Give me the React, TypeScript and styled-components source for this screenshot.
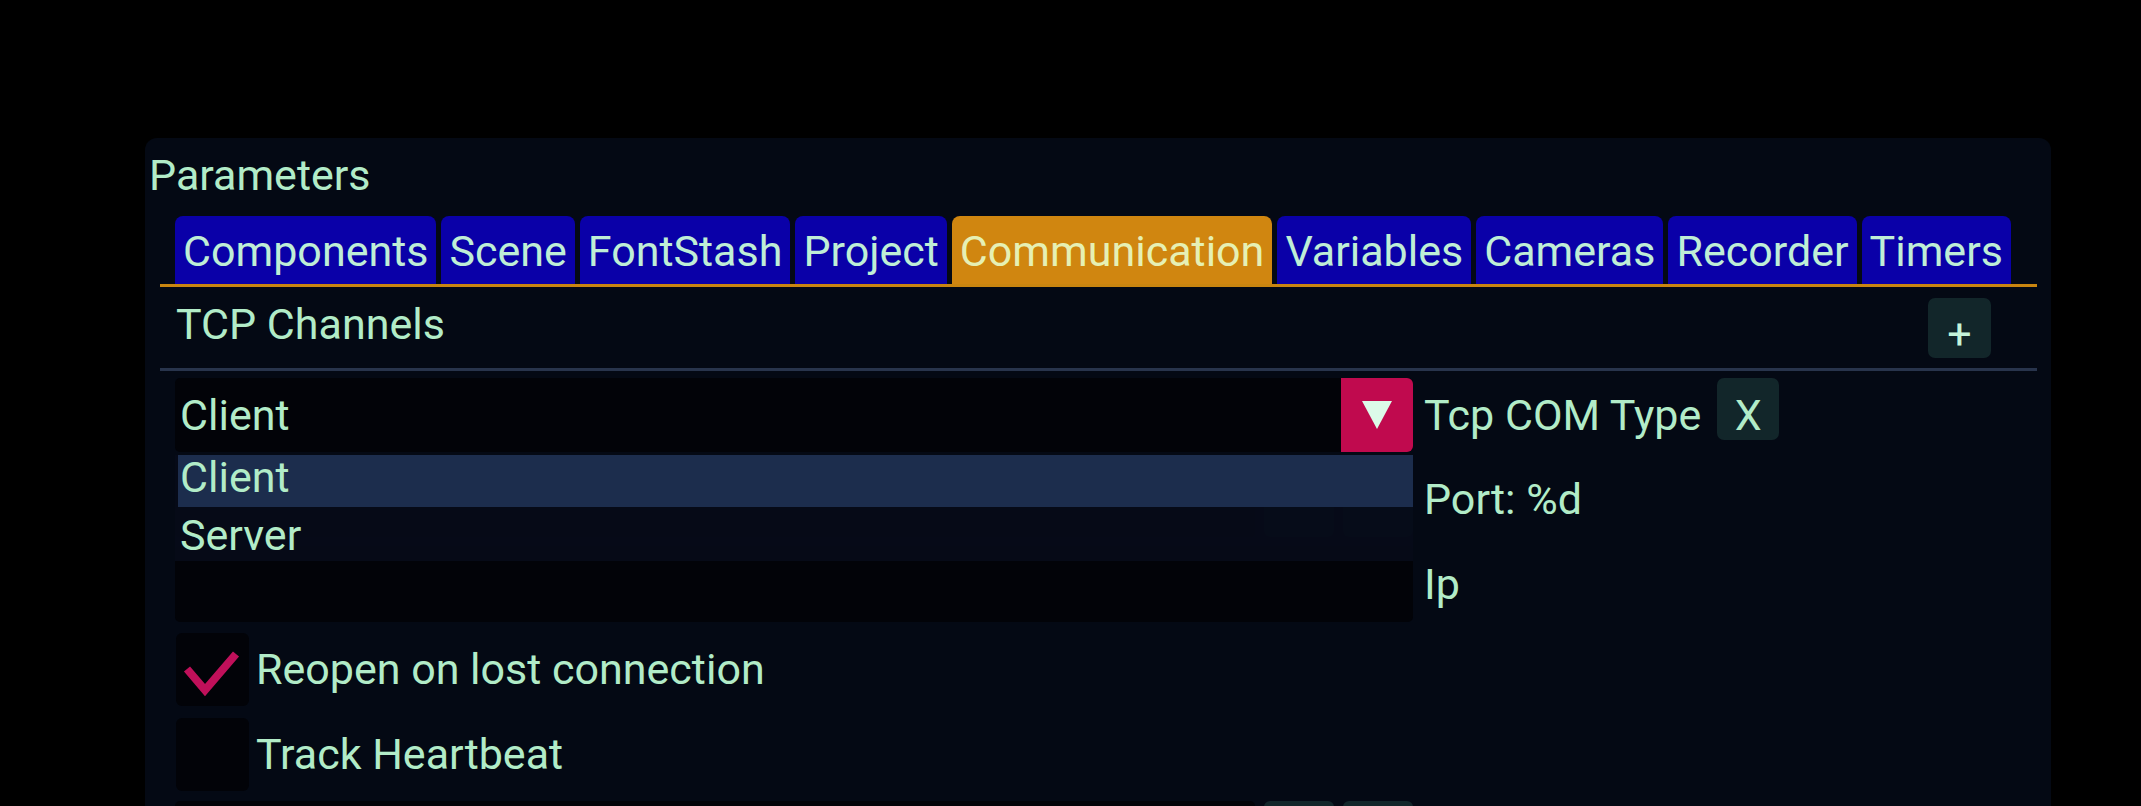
import React from "react";
import styled, { createGlobalStyle } from "styled-components";

const GlobalStyle = createGlobalStyle`
  html, body, #root { margin: 0; padding: 0; background: #000; }
  body { overflow: hidden; font-family: Roboto, "Liberation Sans", sans-serif; }
`;

const Screen = styled.div`
  width: 2141px;
  height: 806px;
  box-sizing: border-box;
  padding: 138px 0 0 145px;
  overflow: hidden;
  background: #000;
`;

const Window = styled.section`
  width: 1906px;
  height: 720px;
  box-sizing: border-box;
  padding: 12px 0 0 4px;
  background: #040914;
  border-radius: 12px 12px 0 0;
  color: #b2ecc8;
  font-size: 43px;
  line-height: 50px;
  display: flex;
  flex-direction: column;
`;

const Title = styled.div`
  height: 50px;
`;

const Body = styled.div`
  margin: 0 14px 0 11px;
  display: flex;
  flex-direction: column;
`;

const TabBar = styled.div`
  margin-top: 16px;
  display: flex;
  gap: 5px;
  padding-left: 15px;
  border-bottom: 3px solid #c98510;
`;

const Tab = styled.div<{ $active?: boolean }>`
  height: 68px;
  box-sizing: border-box;
  padding: 10px 8px 0;
  border-radius: 8px 8px 0 0;
  background: ${(p) => (p.$active ? "#d08610" : "#0a00a8")};
  color: ${(p) => (p.$active ? "#e6f0b4" : "#bfeed6")};
  white-space: nowrap;
`;

const Header = styled.div`
  margin-top: 11px;
  height: 60px;
  display: flex;
  justify-content: space-between;
  align-items: flex-start;
  padding: 0 46px 0 16px;
`;

const HeaderTitle = styled.div`
  padding-top: 1px;
`;

const PlusButton = styled.div`
  width: 63px;
  height: 60px;
  box-sizing: border-box;
  padding-top: 11px;
  text-align: center;
  background: #12262a;
  border-radius: 7px;
  color: #c4f4da;
`;

const Separator = styled.div`
  margin-top: 10px;
  height: 3px;
  background: #28344c;
`;

const Form = styled.div`
  margin-top: 7px;
  padding-left: 15px;
  display: flex;
  flex-direction: column;
  gap: 9px;
`;

const Row = styled.div<{ $h: number }>`
  display: flex;
  align-items: center;
  height: ${(p) => p.$h}px;
  line-height: ${(p) => p.$h}px;
  gap: 11px;
`;

const Field = styled.div`
  position: relative;
  width: 1238px;
  height: 100%;
  display: flex;
  gap: 9px;
`;

const Combo = styled.div`
  flex: 1;
  display: flex;
  background: #020308;
  border-radius: 5px;
`;

const ComboValue = styled.div`
  flex: 1;
  padding-left: 5px;
`;

const ArrowButton = styled.div`
  width: 72px;
  display: flex;
  align-items: center;
  justify-content: center;
  background: #c00a4e;
  border-radius: 0 6px 6px 0;
`;

const Input = styled.div`
  flex: 1;
  background: #020308;
  border-radius: 5px;
`;

const StepButton = styled.div`
  width: 70px;
  background: #12262a;
  border-radius: 6px;
`;

const Label = styled.div`
  white-space: nowrap;
`;

const SmallButton = styled.div`
  align-self: flex-start;
  width: 62px;
  height: 62px;
  margin-left: 5px;
  box-sizing: border-box;
  padding-top: 12px;
  line-height: 50px;
  text-align: center;
  background: #12262a;
  border-radius: 7px;
`;

const Popup = styled.div`
  position: absolute;
  z-index: 2;
  top: 77px;
  left: 0;
  width: 100%;
  box-sizing: border-box;
  padding-left: 3px;
  background: rgba(6, 11, 24, 0.95);
  display: flex;
  flex-direction: column;
`;

const PopupItem = styled.div<{ $active?: boolean; $h: number; $pt: number }>`
  height: ${(p) => p.$h}px;
  box-sizing: border-box;
  padding: ${(p) => p.$pt}px 0 0 2px;
  line-height: 44px;
  background: ${(p) => (p.$active ? "#1c2d4d" : "transparent")};
`;

const CheckRow = styled.div`
  display: flex;
  align-items: center;
  gap: 7px;
  height: 76px;
  line-height: 76px;
`;

const CheckBox = styled.div`
  width: 73px;
  height: 73px;
  margin-left: 1px;
  background: #020308;
  border-radius: 6px;
  display: flex;
`;

const tabs = [
  "Components",
  "Scene",
  "FontStash",
  "Project",
  "Communication",
  "Variables",
  "Cameras",
  "Recorder",
  "Timers",
];

export default function App() {
  return (
    <Screen>
      <GlobalStyle />
      <Window>
        <Title>Parameters</Title>
        <Body>
          <TabBar>
            {tabs.map((t) => (
              <Tab key={t} $active={t === "Communication"}>
                {t}
              </Tab>
            ))}
          </TabBar>
          <Header>
            <HeaderTitle>TCP Channels</HeaderTitle>
            <PlusButton>+</PlusButton>
          </Header>
          <Separator />
          <Form>
            <Row $h={74}>
              <Field>
                <Combo>
                  <ComboValue>Client</ComboValue>
                  <ArrowButton>
                    <svg width="30" height="28" viewBox="0 0 30 28">
                      <polygon points="0,0 30,0 15,28" fill="#dcfbe9" />
                    </svg>
                  </ArrowButton>
                </Combo>
                <Popup>
                  <PopupItem $active $h={52} $pt={0}>
                    Client
                  </PopupItem>
                  <PopupItem $h={54} $pt={6}>
                    Server
                  </PopupItem>
                </Popup>
              </Field>
              <Label>Tcp COM Type</Label>
              <SmallButton>X</SmallButton>
            </Row>
            <Row $h={76}>
              <Field>
                <Input />
                <StepButton />
                <StepButton />
              </Field>
              <Label>Port: %d</Label>
            </Row>
            <Row $h={76}>
              <Field>
                <Input />
              </Field>
              <Label>Ip</Label>
            </Row>
            <CheckRow>
              <CheckBox>
                <svg width="73" height="73" viewBox="0 0 73 73">
                  <polyline
                    points="11,36 29,57 60,21"
                    fill="none"
                    stroke="#c0105a"
                    strokeWidth="8"
                  />
                </svg>
              </CheckBox>
              <span>Reopen on lost connection</span>
            </CheckRow>
            <CheckRow>
              <CheckBox />
              <span>Track Heartbeat</span>
            </CheckRow>
            <Row $h={76}>
              <Field>
                <Input />
                <StepButton />
                <StepButton />
              </Field>
            </Row>
          </Form>
        </Body>
      </Window>
    </Screen>
  );
}
